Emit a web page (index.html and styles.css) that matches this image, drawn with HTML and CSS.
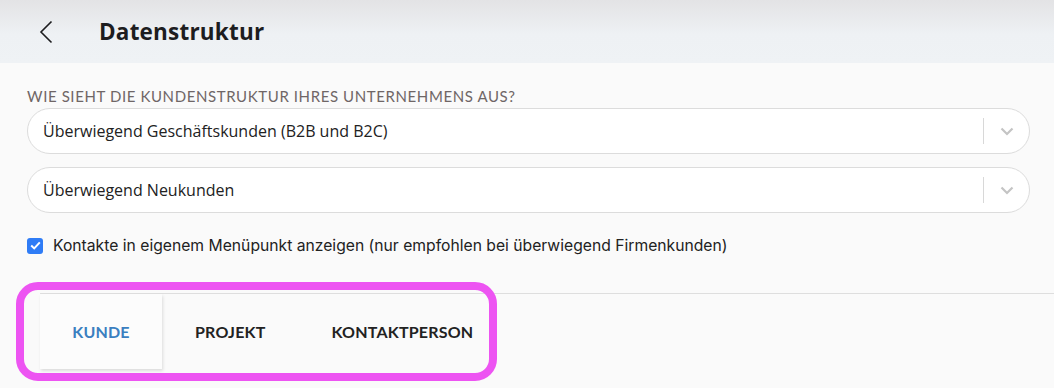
FILE: index.html
```html
<!DOCTYPE html>
<html lang="de">
<head>
    <meta charset="UTF-8">
    <meta name="viewport" content="width=device-width, initial-scale=1.0">
    <title>Datenstruktur</title>
    <link rel="stylesheet" href="styles.css">
</head>
<body>
    <header class="topbar">
        <button class="back" aria-label="Zurück">
            <svg width="14" height="24" viewBox="0 0 14 24"><path d="M12.5 1.5 L2 12 L12.5 22.5" fill="none" stroke="#1d1d1f" stroke-width="1.6"/></svg>
        </button>
        <h1>Datenstruktur</h1>
    </header>

    <main class="content">
        <label class="question">WIE SIEHT DIE KUNDENSTRUKTUR IHRES UNTERNEHMENS AUS?</label>
        <div class="select">
            <span class="select-value">Überwiegend Geschäftskunden (B2B und B2C)</span>
            <span class="select-sep"></span>
            <svg class="select-arrow" width="14" height="9" viewBox="0 0 14 9"><path d="M1.5 1.5 L7 7 L12.5 1.5" fill="none" stroke="#c4c4c4" stroke-width="2.2"/></svg>
        </div>
        <div class="select">
            <span class="select-value">Überwiegend Neukunden</span>
            <span class="select-sep"></span>
            <svg class="select-arrow" width="14" height="9" viewBox="0 0 14 9"><path d="M1.5 1.5 L7 7 L12.5 1.5" fill="none" stroke="#c4c4c4" stroke-width="2.2"/></svg>
        </div>
        <label class="check">
            <span class="check-box">
                <svg width="11" height="9" viewBox="0 0 11 9"><path d="M1.2 4.6 L4.2 7.4 L9.8 1.4" fill="none" stroke="#fff" stroke-width="2"/></svg>
            </span>
            Kontakte in eigenem Menüpunkt anzeigen (nur empfohlen bei überwiegend Firmenkunden)
        </label>
    </main>

    <nav class="tabs">
        <div class="tab active">KUNDE</div>
        <div class="tab">PROJEKT</div>
        <div class="tab">KONTAKTPERSON</div>
        <div class="highlight"></div>
    </nav>
</body>
</html>
```

FILE: styles.css
```css
body {
    margin: 0;
    background: #fafafa;
    font-family: "Open Sans", Lato, sans-serif;
    color: #1d1d1f;
    height: 388px;
    overflow: hidden;
}
.topbar {
    height: 63px;
    display: flex;
    align-items: center;
    background: linear-gradient(#e3e3e5, #eef1f4 55%, #eff2f5);
}
.back {
    border: 0;
    background: none;
    padding: 0;
    margin-left: 39px;
    width: 14px;
    height: 24px;
    display: flex;
}
.topbar h1 {
    margin: 0 0 0 46px;
    font-size: 22.5px;
    font-weight: 700;
    letter-spacing: 0.2px;
}
.content {
    padding: 24px 24px 0 27px;
}
.question {
    display: block;
    font-family: Lato, sans-serif;
    font-size: 15px;
    letter-spacing: 0.6px;
    color: #6f6666;
    margin-bottom: 3px;
}
.select {
    height: 44px;
    border: 1px solid #dcdcdc;
    border-radius: 23px;
    background: #fff;
    display: flex;
    align-items: center;
    margin-bottom: 13px;
}
.select-value {
    flex: 1;
    padding-left: 15px;
    font-size: 16px;
    color: #222;
}
.select-sep {
    width: 1px;
    height: 26px;
    background: #d8d8d8;
}
.select-arrow {
    margin: 0 15px 0 16px;
}
.check {
    display: flex;
    align-items: center;
    gap: 10px;
    margin-top: 23px;
    font-family: Inter, sans-serif;
    font-size: 15.7px;
    color: #222;
}
.check-box {
    width: 16px;
    height: 16px;
    border-radius: 3px;
    background: #2f7cf6;
    display: flex;
    align-items: center;
    justify-content: center;
}
.tabs {
    position: relative;
    margin: 38px 0 0 40px;
    border-top: 1px solid #dedede;
    display: flex;
    height: 75px;
}
.tab {
    display: flex;
    align-items: center;
    justify-content: center;
    font-family: Lato, sans-serif;
    font-size: 16px;
    font-weight: 700;
    letter-spacing: 0.2px;
    color: #222;
    padding: 0 33px;
}
.tab.active {
    width: 122px;
    padding: 0;
    background: #fcfcfc;
    color: #3b7fc0;
    box-shadow: 1px 2px 3px rgba(0, 0, 0, 0.12);
}
.highlight {
    position: absolute;
    left: -24px;
    top: -12px;
    width: 465px;
    height: 83px;
    border: 8px solid #ed54f2;
    border-radius: 22px;
}
```
